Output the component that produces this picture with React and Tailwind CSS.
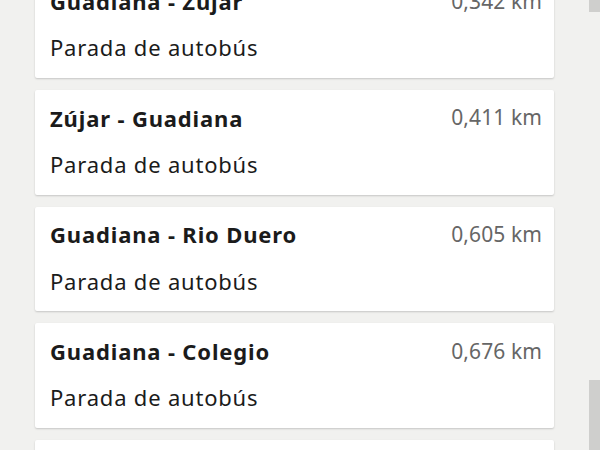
import React from "react";

const items = [
  { name: "Guadiana - Zújar", dist: "0,342 km" },
  { name: "Zújar - Guadiana", dist: "0,411 km" },
  { name: "Guadiana - Rio Duero", dist: "0,605 km" },
  { name: "Guadiana - Colegio", dist: "0,676 km" },
  { name: "Guadiana - Colegio", dist: "0,700 km" },
];

export default function App() {
  return (
    <div
      className="relative w-[600px] h-[450px] overflow-hidden bg-[#f1f1ef]"
      style={{ fontFamily: '"Noto Sans", "Open Sans", sans-serif' }}
    >
      <div className="flex flex-col gap-3 pl-[35px] w-[554px] mt-[-26.67px]">
        {items.map((it, i) => (
          <div
            key={i}
            className="h-[104.67px] bg-white rounded-[2px] shadow-[0_1px_2px_rgba(0,0,0,0.18)] pl-[15px] pr-[12px] pt-[12px] flex flex-col"
          >
            <div className="flex justify-between items-center h-[32px]">
              <span className="text-[22px] font-bold text-[#1b1b1b] tracking-[0.85px]">{it.name}</span>
              <span className="text-[21px] text-[#666666] tracking-[0.1px]">{it.dist}</span>
            </div>
            <div className="mt-[14px] text-[22px] text-[#1b1b1b] leading-[32px] tracking-[0.8px]">
              Parada de autobús
            </div>
          </div>
        ))}
      </div>
      <div className="absolute right-0 top-0 w-[11px] h-[12px] bg-[#cfcfcd]" />
      <div className="absolute right-0 top-[380px] w-[11px] h-[70px] bg-[#cfcfcd]" />
    </div>
  );
}
